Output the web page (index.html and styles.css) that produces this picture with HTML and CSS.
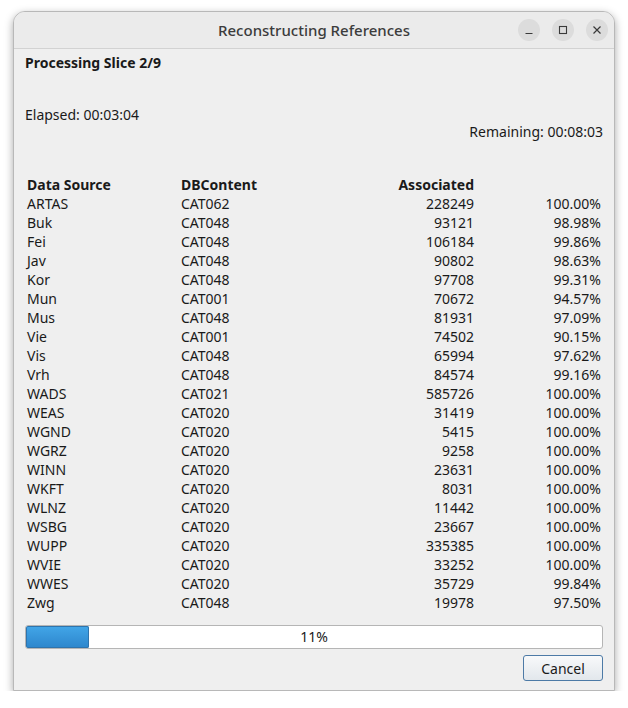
FILE: index.html
```html
<!DOCTYPE html>
<html>
<head>
<meta charset="utf-8">
<link rel="stylesheet" href="styles.css">
</head>
<body>
<div class="window">
  <div class="titlebar">
    <div class="title">Reconstructing References</div>
    <div class="controls">
      <span class="ctl"><svg width="10" height="10" viewBox="0 0 10 10"><path d="M1.5 8.5h7" stroke="#3a3a3a" stroke-width="1.2"/></svg></span>
      <span class="ctl"><svg width="10" height="10" viewBox="0 0 10 10"><rect x="1.5" y="1.5" width="7" height="7" fill="none" stroke="#3a3a3a" stroke-width="1.1"/></svg></span>
      <span class="ctl"><svg width="10" height="10" viewBox="0 0 10 10"><path d="M1.5 1.5l7 7M8.5 1.5l-7 7" stroke="#3a3a3a" stroke-width="1.2"/></svg></span>
    </div>
  </div>
  <div class="content">
    <div class="heading">Processing Slice 2/9</div>
    <div class="times">
      <div class="elapsed">Elapsed: 00:03:04</div>
      <div class="remaining">Remaining: 00:08:03</div>
    </div>
    <div class="table">
      <div class="th">Data Source</div><div class="th">DBContent</div><div class="th r">Associated</div><div class="th r"></div>
      <div>ARTAS</div><div>CAT062</div><div class="r">228249</div><div class="r">100.00%</div>
      <div>Buk</div><div>CAT048</div><div class="r">93121</div><div class="r">98.98%</div>
      <div>Fei</div><div>CAT048</div><div class="r">106184</div><div class="r">99.86%</div>
      <div>Jav</div><div>CAT048</div><div class="r">90802</div><div class="r">98.63%</div>
      <div>Kor</div><div>CAT048</div><div class="r">97708</div><div class="r">99.31%</div>
      <div>Mun</div><div>CAT001</div><div class="r">70672</div><div class="r">94.57%</div>
      <div>Mus</div><div>CAT048</div><div class="r">81931</div><div class="r">97.09%</div>
      <div>Vie</div><div>CAT001</div><div class="r">74502</div><div class="r">90.15%</div>
      <div>Vis</div><div>CAT048</div><div class="r">65994</div><div class="r">97.62%</div>
      <div>Vrh</div><div>CAT048</div><div class="r">84574</div><div class="r">99.16%</div>
      <div>WADS</div><div>CAT021</div><div class="r">585726</div><div class="r">100.00%</div>
      <div>WEAS</div><div>CAT020</div><div class="r">31419</div><div class="r">100.00%</div>
      <div>WGND</div><div>CAT020</div><div class="r">5415</div><div class="r">100.00%</div>
      <div>WGRZ</div><div>CAT020</div><div class="r">9258</div><div class="r">100.00%</div>
      <div>WINN</div><div>CAT020</div><div class="r">23631</div><div class="r">100.00%</div>
      <div>WKFT</div><div>CAT020</div><div class="r">8031</div><div class="r">100.00%</div>
      <div>WLNZ</div><div>CAT020</div><div class="r">11442</div><div class="r">100.00%</div>
      <div>WSBG</div><div>CAT020</div><div class="r">23667</div><div class="r">100.00%</div>
      <div>WUPP</div><div>CAT020</div><div class="r">335385</div><div class="r">100.00%</div>
      <div>WVIE</div><div>CAT020</div><div class="r">33252</div><div class="r">100.00%</div>
      <div>WWES</div><div>CAT020</div><div class="r">35729</div><div class="r">99.84%</div>
      <div>Zwg</div><div>CAT048</div><div class="r">19978</div><div class="r">97.50%</div>
    </div>
    <div class="progress">
      <div class="fill" style="width: 11%"></div>
      <div class="ptext">11%</div>
    </div>
    <div class="buttons">
      <button class="btn">Cancel</button>
    </div>
  </div>
</div>
</body>
</html>
```

FILE: styles.css
```css
html, body {
  margin: 0;
  padding: 0;
  background: #ffffff;
}
body {
  font-family: "Noto Sans", "DejaVu Sans", sans-serif;
  font-size: 14px;
  color: #1a1a1a;
}
.window {
  margin: 11px 0 0 13px;
  width: 602px;
  height: 680px;
  box-sizing: border-box;
  border: 1px solid #b8b8b8;
  border-radius: 12px 12px 0 0;
  background: #efefef;
  box-shadow: 0 3px 9px rgba(0,0,0,0.35);
  overflow: hidden;
  display: flex;
  flex-direction: column;
}
.titlebar {
  height: 36px;
  flex: none;
  background: #ebebeb;
  border-bottom: 1px solid #d2d2d2;
  position: relative;
  display: flex;
  align-items: center;
  justify-content: center;
}
.title {
  font-size: 15px;
  color: #3c3c3c;
  font-weight: 500;
}
.controls {
  position: absolute;
  right: 6px;
  top: 7px;
  display: flex;
  gap: 12px;
}
.ctl {
  width: 22px;
  height: 22px;
  border-radius: 50%;
  background: #dcdcdc;
  display: flex;
  align-items: center;
  justify-content: center;
}
.content {
  padding: 4px 11px 0 11px;
  display: flex;
  flex-direction: column;
}
.heading {
  font-weight: bold;
  line-height: 19px;
}
.times {
  margin-top: 34px;
  line-height: 17px;
  display: flex;
  flex-direction: column;
}
.remaining { align-self: flex-end; }
.table {
  margin-top: 35px;
  margin-left: 2px;
  width: 574px;
  display: grid;
  grid-template-columns: 154px 130px 163px 1fr;
  line-height: 19px;
}
.th { font-weight: bold; }
.r { text-align: right; }
.progress {
  margin-top: 13px;
  height: 24px;
  box-sizing: border-box;
  border: 1px solid #b5b5b5;
  border-radius: 3px;
  background: #ffffff;
  position: relative;
  overflow: hidden;
}
.fill {
  position: absolute;
  left: 0;
  top: 0;
  bottom: 0;
  background: linear-gradient(#42a6e8, #2d86cc);
  border-radius: 2px;
  box-shadow: inset 0 0 0 1px #2e74ad;
}
.ptext {
  position: relative;
  text-align: center;
  line-height: 22px;
  color: #1a1a1a;
}
.buttons {
  margin-top: 6px;
  display: flex;
  justify-content: flex-end;
}
.btn {
  width: 80px;
  height: 26px;
  font-family: inherit;
  font-size: 14px;
  color: #1a1a1a;
  border: 1px solid #4d7aa6;
  border-radius: 3px;
  background: linear-gradient(#f8f9fa, #e2e7ec);
  padding: 0;
}
```
